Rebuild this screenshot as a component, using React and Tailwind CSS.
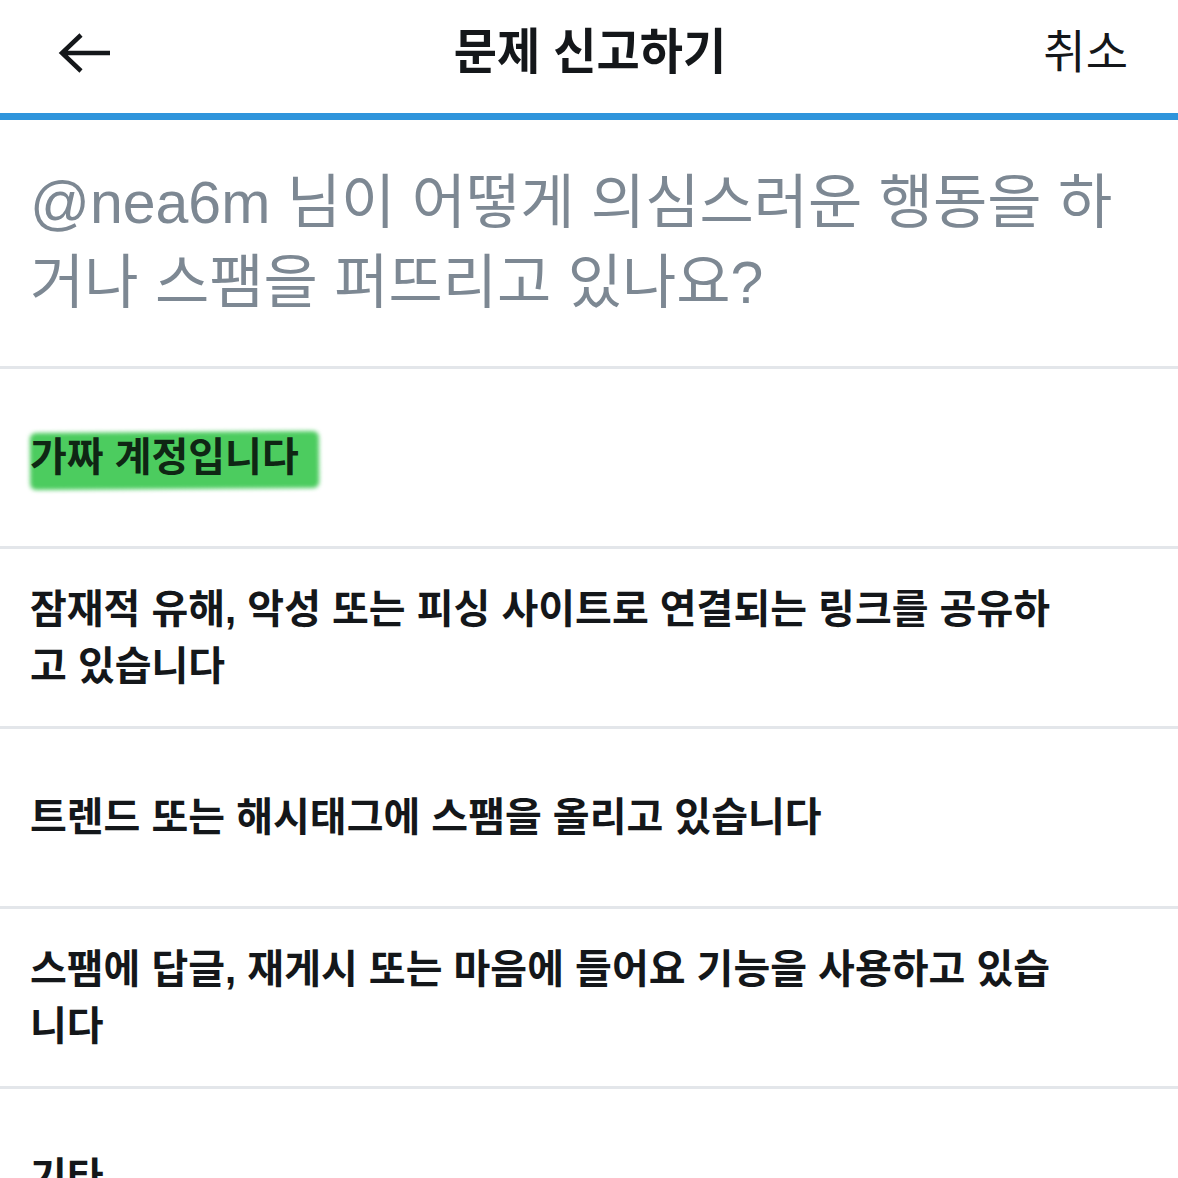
import React from "react";

const FONT = { fontFamily: '"Liberation Sans", "Noto Sans CJK KR", sans-serif' };

function Row({ children, highlight }) {
  return (
    <div className="h-[180px] shrink-0 border-b-[3px] border-[#e3e6ea] flex items-center px-[30px]">
      <div className="text-[40px] leading-[57px] font-bold text-[#14171a] relative">
        {highlight && (
          <span className="absolute left-[0px] -right-[20px] top-[3px] bottom-[-3px] bg-[#4ccc5f] rounded-[6px] blur-[2px] -rotate-[0.4deg]" />
        )}
        <span className={highlight ? "relative text-[#0f2614]" : ""}>{children}</span>
      </div>
    </div>
  );
}

export default function App() {
  return (
    <div style={FONT} className="w-[1178px] h-[1178px] overflow-hidden bg-white flex flex-col">
      <div className="h-[113px] shrink-0 flex items-center justify-between px-[58px] pr-[50px] relative">
        <svg width="54" height="40" viewBox="0 0 54 40" className="mt-[-8px]">
          <path d="M52 20 H4 M23 2 L4 20 L23 38" fill="none" stroke="#14171a" strokeWidth="4.5" strokeLinecap="butt" strokeLinejoin="miter" />
        </svg>
        <div className="absolute left-0 right-0 top-0 h-[113px] flex items-center justify-center pointer-events-none">
          <span className="text-[47px] font-bold text-[#14171a] scale-y-[1.05] mt-[-8px] ml-[2px]">문제 신고하기</span>
        </div>
        <span className="text-[46px] text-[#14171a] mt-[-8px]">취소</span>
      </div>
      <div className="h-[7px] shrink-0 bg-[#2f95dc]" />
      <div className="h-[249px] shrink-0 flex items-center px-[30px] border-b-[3px] border-[#e3e6ea]">
        <p className="text-[59px] leading-[80px] text-[#7d8893] whitespace-nowrap">
          @nea6m 님이 어떻게 의심스러운 행동을 하<br />거나 스팸을 퍼뜨리고 있나요?
        </p>
      </div>
      <Row highlight>가짜 계정입니다</Row>
      <Row>
        잠재적 유해, 악성 또는 피싱 사이트로 연결되는 링크를 공유하<br />고 있습니다
      </Row>
      <Row>트렌드 또는 해시태그에 스팸을 올리고 있습니다</Row>
      <Row>
        스팸에 답글, 재게시 또는 마음에 들어요 기능을 사용하고 있습<br />니다
      </Row>
      <Row>기타</Row>
    </div>
  );
}
